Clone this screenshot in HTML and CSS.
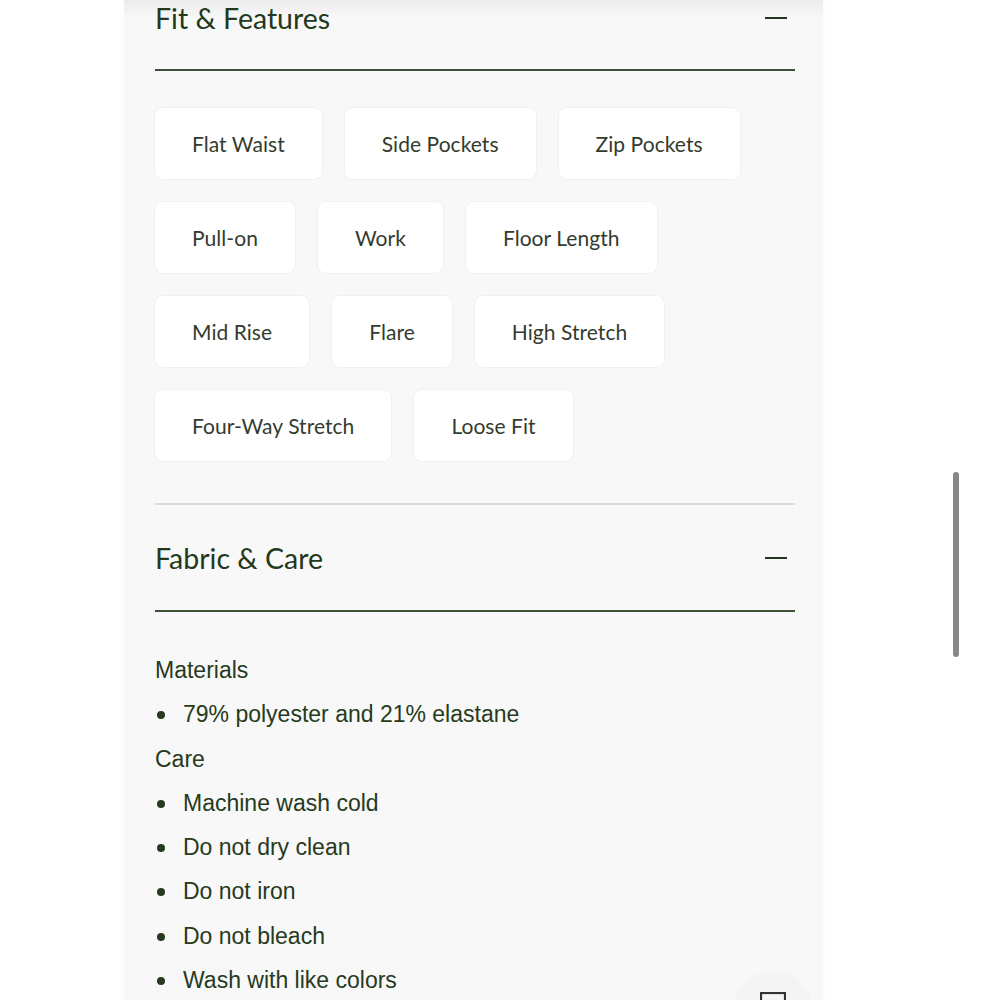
FILE: index.html
```html
<!DOCTYPE html>
<html lang="en">
<head>
<meta charset="utf-8">
<title>Product details</title>
<link rel="stylesheet" href="styles.css">
</head>
<body>
<main class="panel">
  <div class="top-shade"></div>
  <section class="accordion">
    <header class="acc-head first">
      <h2 class="acc-title">Fit &amp; Features</h2>
      <span class="minus"></span>
    </header>
    <div class="chips">
      <span class="chip">Flat Waist</span>
      <span class="chip">Side Pockets</span>
      <span class="chip">Zip Pockets</span>
      <span class="chip">Pull-on</span>
      <span class="chip">Work</span>
      <span class="chip">Floor Length</span>
      <span class="chip">Mid Rise</span>
      <span class="chip">Flare</span>
      <span class="chip">High Stretch</span>
      <span class="chip">Four-Way Stretch</span>
      <span class="chip">Loose Fit</span>
    </div>
  </section>
  <section class="accordion second">
    <header class="acc-head">
      <h2 class="acc-title">Fabric &amp; Care</h2>
      <span class="minus"></span>
    </header>
    <div class="care">
      <p class="care-label">Materials</p>
      <ul class="care-list">
        <li>79% polyester and 21% elastane</li>
      </ul>
      <p class="care-label">Care</p>
      <ul class="care-list">
        <li>Machine wash cold</li>
        <li>Do not dry clean</li>
        <li>Do not iron</li>
        <li>Do not bleach</li>
        <li>Wash with like colors</li>
      </ul>
    </div>
  </section>
</main>
<div class="scrollbar"></div>
<button class="fab" aria-label="Chat">
  <svg width="26" height="26" viewBox="0 0 26 26"><rect x="1" y="1" width="24" height="24" fill="none" stroke="#333" stroke-width="2.2"/></svg>
</button>
</body>
</html>
```
FILE: styles.css
```css
html, body {
  margin: 0;
  padding: 0;
  background: #ffffff;
  height: 1000px;
  overflow: hidden;
}
body {
  font-family: "Lato", "Liberation Sans", sans-serif;
}
.panel {
  position: relative;
  width: 640px;
  margin: -33px 0 0 124px;
  padding: 0 28px 0 31px;
  background: #f8f8f8;
  min-height: 1100px;
  box-shadow: 0 0 6px rgba(0,0,0,0.03);
}
.top-shade {
  position: absolute;
  left: 0;
  right: 0;
  top: 33px;
  height: 18px;
  background: linear-gradient(rgba(0,0,0,0.05), rgba(0,0,0,0));
}
.acc-head {
  height: 102px;
  display: flex;
  align-items: center;
  justify-content: space-between;
  border-bottom: 2px solid #3d5234;
}
.second .acc-head {
  height: 105px;
}
.acc-title {
  margin: 0;
  font-weight: 400;
  font-size: 28.5px;
  color: #23391c;
  letter-spacing: 0px;
}
.minus {
  width: 22px;
  height: 2px;
  background: #23391c;
  margin-right: 8px;
}
.chips {
  display: flex;
  flex-wrap: wrap;
  gap: 23px 23px;
  padding: 37px 0 42px;
  border-bottom: 2px solid #dcdcdc;
}
.chip {
  background: #ffffff;
  border-radius: 8px;
  height: 71px;
  padding: 0 37px;
  display: flex;
  align-items: center;
  font-size: 21px;
  letter-spacing: 0.05px;
  color: #333b2e;
  box-shadow: 0 0 0 1px #f0f0f0;
}
.care {
  padding-top: 36px;
  font-family: "Liberation Sans", Arial, sans-serif;
  font-size: 23px;
  color: #263a20;
}
.care-label {
  margin: 0;
  line-height: 44.3px;
}
.care-list {
  list-style: none;
  margin: 0;
  padding: 0;
}
.care-list li {
  position: relative;
  padding-left: 28px;
  line-height: 44.3px;
}
.care-list li::before {
  content: "";
  position: absolute;
  left: 2px;
  top: 19px;
  width: 8px;
  height: 8px;
  border-radius: 50%;
  background: #263a20;
}
.scrollbar {
  position: absolute;
  left: 953px;
  top: 472px;
  width: 6px;
  height: 185px;
  border-radius: 3px;
  background: #878787;
}
.fab {
  position: absolute;
  left: 735px;
  top: 972px;
  width: 76px;
  height: 76px;
  border-radius: 50%;
  border: none;
  background: #f4f4f4;
  box-shadow: 0 0 4px rgba(0,0,0,0.04);
  display: flex;
  justify-content: center;
  padding-top: 20px;
  margin: 0;
}
```
